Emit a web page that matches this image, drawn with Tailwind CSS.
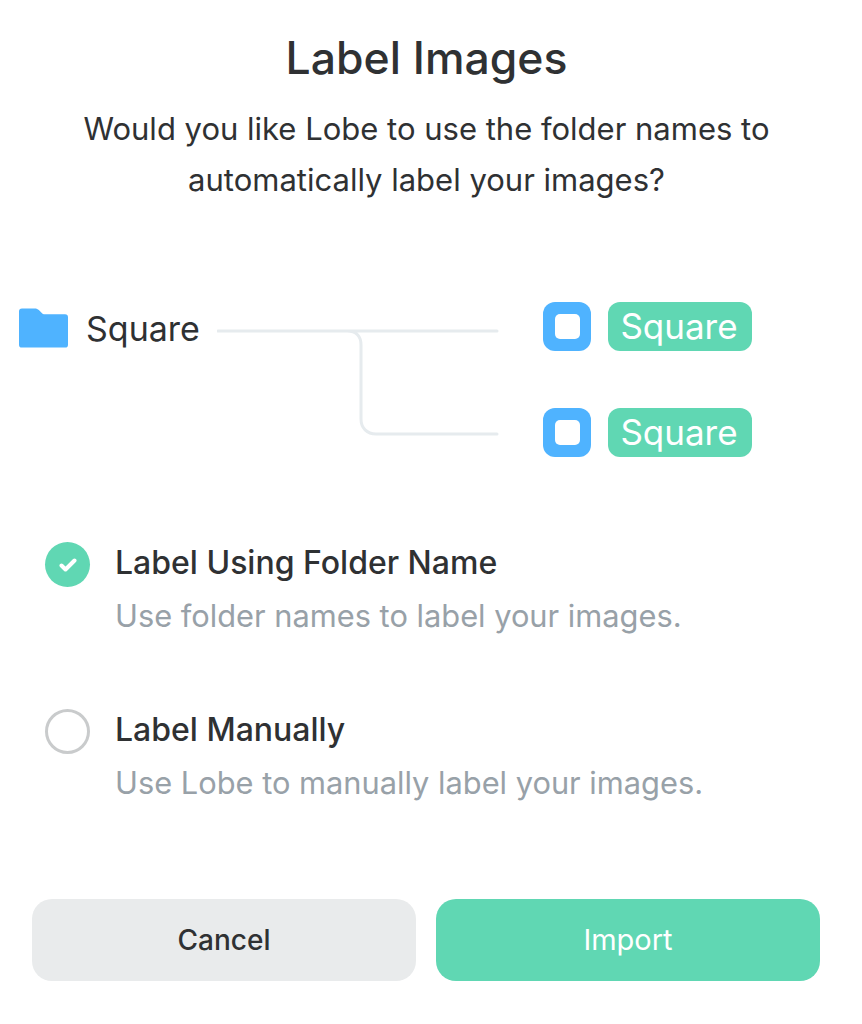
<!DOCTYPE html>
<html lang="en">
<head>
    <meta charset="UTF-8">
    <title>Label Images</title>
    <script src="https://cdn.jsdelivr.net/npm/@tailwindcss/browser@4"></script>
</head>
<body class="bg-white font-['Inter',sans-serif] w-[862px] h-[1024px] overflow-hidden">
    <!-- Header -->
    <div class="pt-[31px] pr-[9px] text-center">
        <h1 class="text-[44.500px] leading-[54px] font-medium text-[#2f3133]">Label Images</h1>
        <p class="mt-[18px] text-[31px] leading-[51px] text-[#2f3133]">Would you like Lobe to use the folder names to<br>automatically label your images?</p>
    </div>

    <!-- Diagram -->
    <div class="flex mt-[97px] pl-[19px] h-[155px]">
        <div class="flex items-start w-[198px] pt-[6px]">
            <svg width="49" height="40" viewBox="0 0 50 40" class="shrink-0">
                <path d="M0 3a3 3 0 0 1 3-3h13c2 0 3 .6 4.500 2l3 3c.8.8 1.500 1 2.500 1h21a3 3 0 0 1 3 3v28a3 3 0 0 1-3 3H3a3 3 0 0 1-3-3z" fill="#4fb3ff"/>
            </svg>
            <span class="ml-[18px] text-[34px] leading-[42px] text-[#2f3133]">Square</span>
        </div>
        <svg width="282" height="112" viewBox="0 0 282 112" fill="none" class="shrink-0 mt-[26px]">
            <path d="M1 3H280M130 3c10 0 14 6 14 14v74c0 9 6 15 15 15h121" stroke="#e6ebee" stroke-width="3" stroke-linecap="round"/>
        </svg>
        <div class="ml-[44px] flex flex-col gap-[57px]">
            <div class="flex gap-[17px]">
                <div class="w-[48px] h-[49px] rounded-[12px] bg-[#4fb3ff] flex items-center justify-center">
                    <div class="w-[25px] h-[25px] rounded-[5px] bg-white"></div>
                </div>
                <div class="w-[144px] h-[49px] pr-[2px] rounded-[12px] bg-[#60d7b3] text-white text-[35px] leading-[49px] text-center">Square</div>
            </div>
            <div class="flex gap-[17px]">
                <div class="w-[48px] h-[49px] rounded-[12px] bg-[#4fb3ff] flex items-center justify-center">
                    <div class="w-[25px] h-[25px] rounded-[5px] bg-white"></div>
                </div>
                <div class="w-[144px] h-[49px] pr-[2px] rounded-[12px] bg-[#60d7b3] text-white text-[35px] leading-[49px] text-center">Square</div>
            </div>
        </div>
    </div>

    <!-- Options -->
    <div class="mt-[85px] pl-[45px] flex flex-col gap-[72px]">
        <div class="flex">
            <div class="w-[45px] h-[45px] rounded-full bg-[#60d7b3] flex items-center justify-center shrink-0">
                <svg width="18" height="14" viewBox="0 0 18 14" fill="none"><path d="M2.500 7.500l4 4 9-9" stroke="#fff" stroke-width="4" stroke-linecap="round" stroke-linejoin="round"/></svg>
            </div>
            <div class="ml-[25px]">
                <div class="text-[32px] leading-[42px] font-medium text-[#2f3133]">Label Using Folder Name</div>
                <div class="mt-[11px] text-[30.800px] leading-[42px] text-[#98a1a8]">Use folder names to label your images.</div>
            </div>
        </div>
        <div class="flex">
            <div class="w-[45px] h-[45px] rounded-full border-[3px] border-[#c9cbcc] shrink-0"></div>
            <div class="ml-[25px]">
                <div class="text-[32px] leading-[42px] font-medium text-[#2f3133]">Label Manually</div>
                <div class="mt-[11px] text-[30.800px] leading-[42px] text-[#98a1a8]">Use Lobe to manually label your images.</div>
            </div>
        </div>
    </div>

    <!-- Buttons -->
    <div class="mt-[95px] px-[32px] flex gap-[20px]">
        <button class="w-[384px] h-[82px] rounded-[20px] bg-[#e9ebec] text-[#2f3133] text-[28px] font-medium">Cancel</button>
        <button class="w-[384px] h-[82px] rounded-[20px] bg-[#60d7b3] text-white text-[29px]">Import</button>
    </div>
</body>
</html>
